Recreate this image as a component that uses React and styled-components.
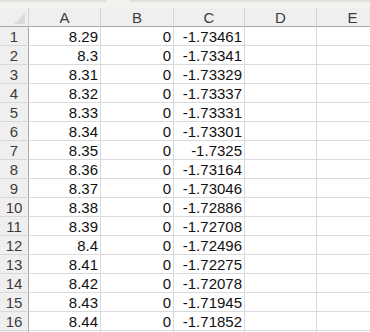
import React from 'react';
import styled, { createGlobalStyle } from 'styled-components';

const GlobalStyle = createGlobalStyle`
  html, body {
    margin: 0;
    padding: 0;
    background: #ffffff;
    overflow: hidden;
  }
`;

const Page = styled.div`
  width: 370px;
  height: 332px;
  overflow: hidden;
  background: #ffffff;
`;

const TopStrip = styled.div`
  height: 8px;
  background: #f3f2ee;
  display: flex;
  align-items: flex-start;
  gap: 23px;
`;

const ToolEdge = styled.div`
  height: 2px;
  width: ${({ width }) => width};
  flex: ${({ grow }) => (grow ? '1' : 'none')};
  background: #e1e0dc;
`;

const Sheet = styled.div`
  display: grid;
  grid-template-columns: 29px 72px 73px 71px 72px 72px;
  grid-auto-rows: 19px;
  width: 389px;
  font-family: 'Liberation Sans', Arial, sans-serif;
`;

const Corner = styled.div`
  position: relative;
  box-sizing: border-box;
  background: #efefef;
  border-right: 1px solid #d4d4d4;
  border-bottom: 1px solid #a8a8a8;

  &::after {
    content: '';
    position: absolute;
    right: 3px;
    bottom: 2px;
    width: 0;
    height: 0;
    border-left: 11px solid transparent;
    border-bottom: 11px solid #dadada;
  }
`;

const ColHead = styled.div`
  box-sizing: border-box;
  background: #efefef;
  border-right: 1px solid #d4d4d4;
  border-bottom: 1px solid #a8a8a8;
  color: #3c3c3c;
  font-size: 15px;
  line-height: 16px;
  padding-top: 2px;
  text-align: center;
`;

const RowHead = styled.div`
  box-sizing: border-box;
  background: #efefef;
  border-right: 1px solid #a8a8a8;
  border-bottom: 1px solid #d9d9d9;
  color: #3c3c3c;
  font-size: 15px;
  line-height: 16px;
  padding-top: 2px;
  text-align: center;
`;

const Cell = styled.div`
  box-sizing: border-box;
  border-right: 1px solid #dadada;
  border-bottom: 1px solid #dadada;
  color: #111111;
  font-size: 15px;
  line-height: 16px;
  padding: 2px 2px 0 2px;
  text-align: ${({ align }) => align || 'right'};
  white-space: nowrap;
  overflow: hidden;
`;

const columns = ['A', 'B', 'C', 'D', 'E'];

const cValues = [
  '-1.73461',
  '-1.73341',
  '-1.73329',
  '-1.73337',
  '-1.73331',
  '-1.73301',
  '-1.7325',
  '-1.73164',
  '-1.73046',
  '-1.72886',
  '-1.72708',
  '-1.72496',
  '-1.72275',
  '-1.72078',
  '-1.71945',
  '-1.71852',
];

const rows = cValues.map((c, i) => ({
  n: i + 1,
  a: String(Number((8.29 + i * 0.01).toFixed(2))),
  b: '0',
  c,
}));

const App = () => (
  <Page>
    <GlobalStyle />
    <TopStrip>
      <ToolEdge width="107px" />
      <ToolEdge grow />
    </TopStrip>
    <Sheet>
      <Corner />
      {columns.map((col) => (
        <ColHead key={col}>{col}</ColHead>
      ))}
      {rows.map((row) => (
        <React.Fragment key={row.n}>
          <RowHead>{row.n}</RowHead>
          <Cell>{row.a}</Cell>
          <Cell>{row.b}</Cell>
          <Cell>{row.c}</Cell>
          <Cell />
          <Cell />
        </React.Fragment>
      ))}
      <RowHead />
      <Cell />
      <Cell />
      <Cell />
      <Cell />
      <Cell />
    </Sheet>
  </Page>
);

export default App;
